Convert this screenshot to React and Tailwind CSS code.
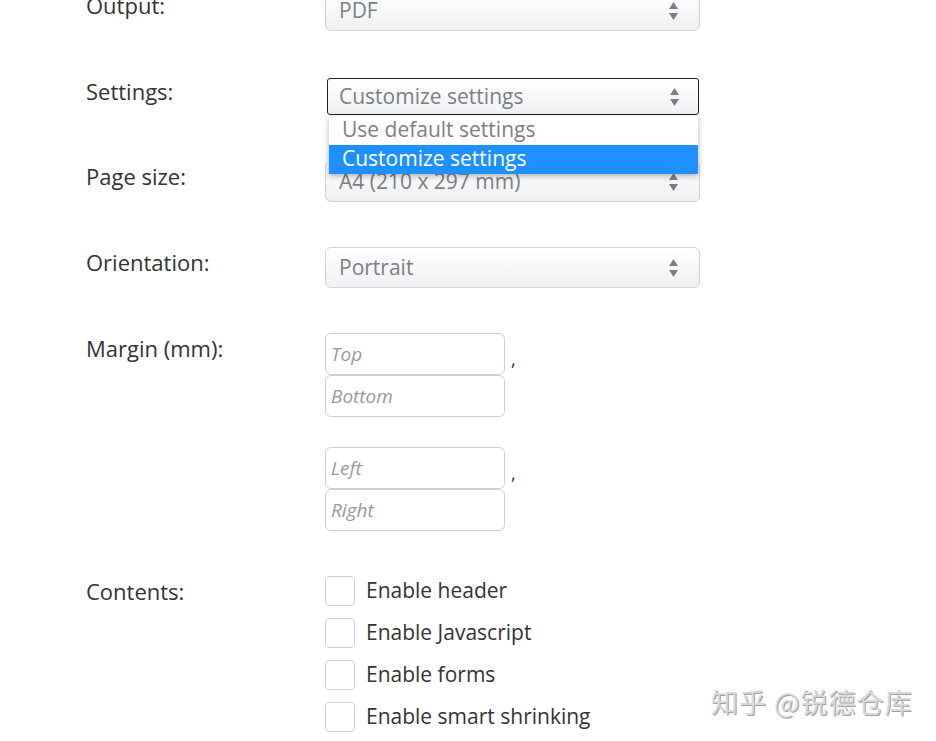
const font = { fontFamily: '"Open Sans", "Noto Sans", sans-serif' }

function Arrows() {
  return (
    <svg width="11" height="22" viewBox="0 0 11 22" className="shrink-0">
      <path d="M5.5 2 L10 9 L1 9 Z" fill="#7a7f87" />
      <path d="M5.5 20 L10 13 L1 13 Z" fill="#7a7f87" />
    </svg>
  )
}

function Select({ value }) {
  return (
    <div className="flex h-[41px] w-[375px] items-center justify-between rounded-[6px] border border-[#d0d3d8] bg-gradient-to-b from-white to-[#eef0f2] pl-[13px] pr-[20px] text-[21px] text-[#7b7f86]">
      <span>{value}</span>
      <Arrows />
    </div>
  )
}

function Row({ label, children, className = '' }) {
  return (
    <div className={`flex ${className}`}>
      <div className="mt-px w-[239px] shrink-0 text-[22px] font-medium leading-[28px] text-[#333]">{label}</div>
      <div>{children}</div>
    </div>
  )
}

function Box({ placeholder }) {
  return (
    <div className="flex h-[42px] w-[180px] items-center rounded-[6px] border border-[#cfcfcf] bg-white pl-[5px] text-[19px] italic text-[#999]">
      {placeholder}
    </div>
  )
}

function Pair({ a, b }) {
  return (
    <div className="flex">
      <div className="flex flex-col">
        <Box placeholder={a} />
        <Box placeholder={b} />
      </div>
      <span className="ml-[6px] mt-[13px] text-[18px] text-[#333]">,</span>
    </div>
  )
}

function Check({ label }) {
  return (
    <div className="flex h-[30px] items-center">
      <div className="h-[30px] w-[30px] rounded-[4px] border border-[#cfcfcf] bg-white" />
      <span className="ml-[11px] text-[21px] text-[#333]">{label}</span>
    </div>
  )
}

export default function App() {
  return (
    <div className="relative h-[741px] w-[936px] overflow-hidden bg-white" style={font}>
      <div className="-mt-[10px] flex flex-col pl-[86px]">
        <Row label="Output:">
          <Select value="PDF" />
        </Row>

        <Row label="Settings:" className="mt-[45px]">
          <div className="relative">
            <div className="m-[2px] flex h-[37px] w-[372px] items-center justify-between rounded-[3px] border border-[#222] bg-gradient-to-b from-white to-[#eef0f2] pl-[11px] pr-[18px] text-[21px] text-[#7b7f86]">
              <span>Customize settings</span>
              <Arrows />
            </div>
            {/* open option list of the settings select */}
            <div className="absolute left-[4px] top-[38px] z-10 w-[369px] bg-white text-[21px] shadow-[0_2px_6px_rgba(0,0,0,0.3)]">
              <div className="flex h-[29px] items-center pb-[2px] pl-[13px] text-[#7b7f86]">Use default settings</div>
              <div className="flex h-[29px] items-center pb-[2px] bg-[#1e90ff] pl-[13px] text-white">Customize settings</div>
            </div>
          </div>
        </Row>

        <Row label="Page size:" className="mt-[44px]">
          <Select value="A4 (210 x 297 mm)" />
        </Row>

        <Row label="Orientation:" className="mt-[45px]">
          <Select value="Portrait" />
        </Row>

        <Row label="Margin (mm):" className="mt-[45px]">
          <div className="flex flex-col gap-[30px]">
            <Pair a="Top" b="Bottom" />
            <Pair a="Left" b="Right" />
          </div>
        </Row>

        <Row label="Contents:" className="mt-[45px]">
          <div className="flex flex-col gap-[12px]">
            <Check label="Enable header" />
            <Check label="Enable Javascript" />
            <Check label="Enable forms" />
            <Check label="Enable smart shrinking" />
          </div>
        </Row>
      </div>

      <div
        className="absolute left-[711px] top-[682px] text-[27px] tracking-[1px] text-[#d9d9d9] [text-shadow:1px_1px_0_#a0a0a0]"
        style={{ fontFamily: '"Noto Sans CJK SC", sans-serif' }}
      >
        知乎 @锐德仓库
      </div>
    </div>
  )
}
